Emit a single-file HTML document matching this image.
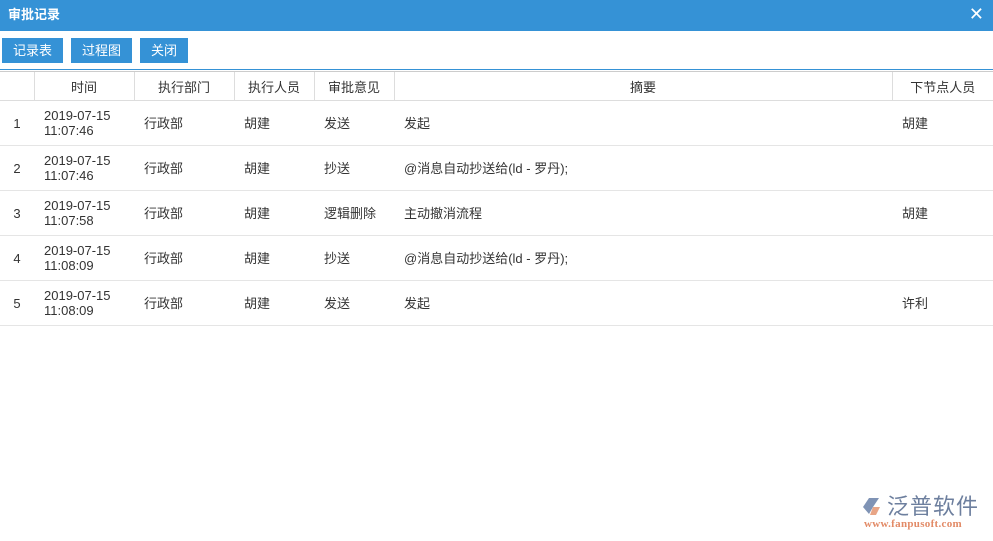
<!DOCTYPE html>
<html><head><style>
body{margin:0;width:993px;height:541px;background:#fff;font-family:"Liberation Sans","Noto Sans CJK SC",sans-serif;font-size:13px;color:#333;position:relative;overflow:hidden}
.t{position:absolute;left:0;top:0;width:993px;height:31px;background:#3592d6;color:#fff;font-weight:bold;font-size:13px;line-height:29px;text-indent:8px}
.x{position:absolute;right:9px;top:0;color:#fff;font-size:18px;line-height:29px;font-weight:normal}
.b{position:absolute;top:38px;height:25px;background:#3592d6;color:#fff;line-height:25px;text-align:center;font-size:13px}
.l1{position:absolute;top:69px;left:0;width:993px;height:1px;background:#3592d6}
.l2{position:absolute;top:71px;left:0;width:993px;height:1px;background:#ccc}
table{position:absolute;top:72px;left:0;border-collapse:collapse;width:993px;table-layout:fixed;font-size:13px}
th{height:28px;font-weight:normal;border-right:1px solid #ddd;border-bottom:1px solid #ddd;text-align:center;padding:0}
td{height:44px;border-bottom:1px solid #e5e5e5;padding:0 0 0 10px;line-height:15px}
td.n{text-align:center;padding:0}
</style></head><body>
<div class="t">审批记录<span class="x">✕</span></div>
<div class="b" style="left:2px;width:61px">记录表</div>
<div class="b" style="left:71px;width:61px">过程图</div>
<div class="b" style="left:140px;width:48px">关闭</div>
<div class="l1"></div><div class="l2"></div>
<table>
<colgroup><col style="width:34px"><col style="width:100px"><col style="width:100px"><col style="width:80px"><col style="width:80px"><col style="width:498px"><col></colgroup>
<tr><th></th><th>时间</th><th>执行部门</th><th>执行人员</th><th>审批意见</th><th>摘要</th><th style="border-right:0">下节点人员</th></tr>
<tr><td class="n">1</td><td>2019-07-15<br>11:07:46</td><td>行政部</td><td>胡建</td><td>发送</td><td>发起</td><td>胡建</td></tr>
<tr><td class="n">2</td><td>2019-07-15<br>11:07:46</td><td>行政部</td><td>胡建</td><td>抄送</td><td>@消息自动抄送给(ld - 罗丹);</td><td></td></tr>
<tr><td class="n">3</td><td>2019-07-15<br>11:07:58</td><td>行政部</td><td>胡建</td><td>逻辑删除</td><td>主动撤消流程</td><td>胡建</td></tr>
<tr><td class="n">4</td><td>2019-07-15<br>11:08:09</td><td>行政部</td><td>胡建</td><td>抄送</td><td>@消息自动抄送给(ld - 罗丹);</td><td></td></tr>
<tr><td class="n">5</td><td>2019-07-15<br>11:08:09</td><td>行政部</td><td>胡建</td><td>发送</td><td>发起</td><td>许利</td></tr>
</table>
<svg style="position:absolute;left:862px;top:496px" width="24" height="22" viewBox="0 0 24 22"><path d="M1 11 L7 2 H17 L11 11 L7 18 Z" fill="#7f93b5"/><path d="M11 11 H18 L14 19 H8 Z" fill="#e8a586"/></svg>
<div style="position:absolute;left:887px;top:494px;font-size:22px;line-height:26px;color:#6d7f9e;letter-spacing:1px">泛普软件</div>
<div style="position:absolute;left:864px;top:518px;font-size:11px;color:#e28a66;font-weight:bold;font-family:'Liberation Serif',serif;letter-spacing:0.3px">www.fanpusoft.com</div>
</body></html>
